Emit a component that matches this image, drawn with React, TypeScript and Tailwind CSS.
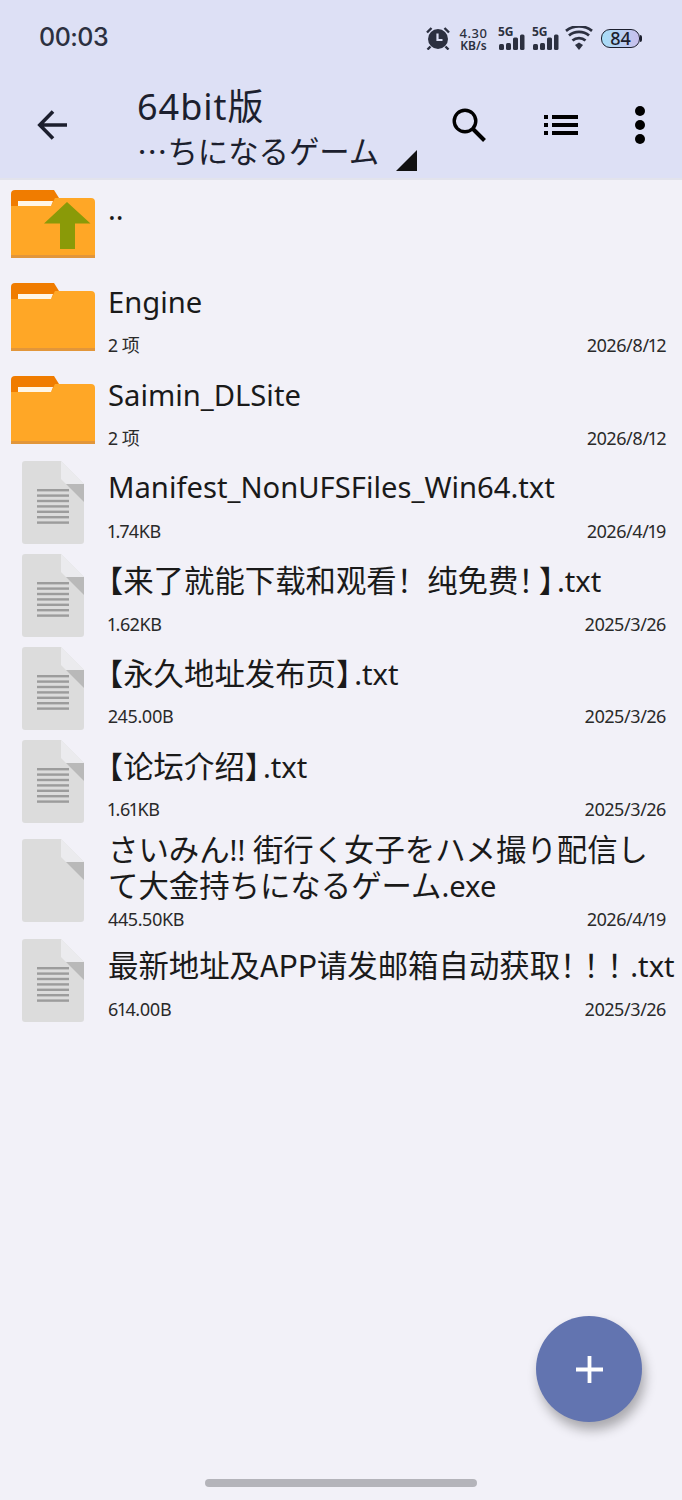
type Item = {
  kind: "up" | "folder" | "doc" | "blank";
  name: string;
  sub?: string;
  date?: string;
  tall?: boolean;
};

const items: Item[] = [
  { kind: "up", name: ".." },
  { kind: "folder", name: "Engine", sub: "2 项", date: "2026/8/12" },
  { kind: "folder", name: "Saimin_DLSite", sub: "2 项", date: "2026/8/12" },
  { kind: "doc", name: "Manifest_NonUFSFiles_Win64.txt", sub: "1.74KB", date: "2026/4/19" },
  { kind: "doc", name: "【来了就能下载和观看！纯免费！】.txt", sub: "1.62KB", date: "2025/3/26" },
  { kind: "doc", name: "【永久地址发布页】.txt", sub: "245.00B", date: "2025/3/26" },
  { kind: "doc", name: "【论坛介绍】.txt", sub: "1.61KB", date: "2025/3/26" },
  {
    kind: "blank",
    name: "さいみん!! 街行く女子をハメ撮り配信し\nて大金持ちになるゲーム.exe",
    sub: "445.50KB",
    date: "2026/4/19",
    tall: true,
  },
  { kind: "doc", name: "最新地址及APP请发邮箱自动获取！！！.txt", sub: "614.00B", date: "2025/3/26" },
];

const cjkFont = "font-['Noto_Sans_CJK_SC',sans-serif] text-[30.4px] leading-[0px]";

// the reference mixes a slightly larger CJK face with latin, and squeezes brackets and trailing "！"
function Title({ text }: { text: string }) {
  const parts = text.match(/[【】！\n]|APP|[\u3040-\u9fff]+|[^【】！\u3040-\u9fff\n]+?(?=APP|[【】！\u3040-\u9fff\n]|$)/g) ?? [];
  return (
    <>
      {parts.map((p, i) => {
        if (p === "【") {
          return (
            <span key={i} className={cjkFont + " [font-feature-settings:'halt']"}>
              {p}
            </span>
          );
        }
        if (p === "】") {
          return (
            <span key={i} className={cjkFont + " [font-feature-settings:'halt'] tracking-[3px]"}>
              {p}
            </span>
          );
        }
        if (p === "！") {
          const next = parts[i + 1] ?? "";
          if (next === "】") {
            return (
              <span key={i} className={cjkFont + " tracking-[-10px]"}>
                {p}
              </span>
            );
          }
          const squeezed = next === "！" || next.startsWith(".");
          return (
            <span key={i} className={squeezed ? cjkFont + " tracking-[-7px]" : cjkFont}>
              {p}
            </span>
          );
        }
        if (p === "APP" || /[\u3040-\u9fff]/.test(p)) {
          return (
            <span key={i} className={cjkFont}>
              {p}
            </span>
          );
        }
        return <span key={i}>{p}</span>;
      })}
    </>
  );
}

function FolderIcon({ up }: { up?: boolean }) {
  return (
    <svg width="84" height="68" viewBox="0 0 84 68" className="ml-[11px] mt-[10px]">
      <path d="M0 4a4 4 0 0 1 4-4h39l5 8v10H0z" fill="#f07c00" />
      <path d="M0 16h40l4-8h36a4 4 0 0 1 4 4v56H0z" fill="#ffa726" />
      <path d="M7 11h35l-2 5H7z" fill="#fff6e6" />
      <rect x="0" y="65" width="84" height="3" fill="#e2963a" />
      {up && <path d="M56 12l23.500 21.500H64V59H49V33.500H33z" fill="#8a9a08" />}
    </svg>
  );
}

function DocIcon({ lines }: { lines?: boolean }) {
  return (
    <svg width="62" height="83" viewBox="0 0 62 83" className="ml-[22px] mt-[3px]">
      <path d="M3 0h36l23 23v57a3 3 0 0 1-3 3H3a3 3 0 0 1-3-3V3a3 3 0 0 1 3-3z" fill="#dcdcdc" />
      <path d="M39 0l23 23H44l-5-5z" fill="#ebebee" />
      <path d="M44 23h18v18z" fill="#b9b9b9" />
      {lines && (
        <g fill="#9c9c9c">
          <rect x="15" y="28" width="32" height="2.4" />
          <rect x="15" y="33.4" width="32" height="2.4" />
          <rect x="15" y="38.8" width="32" height="2.4" />
          <rect x="15" y="44.2" width="32" height="2.4" />
          <rect x="15" y="49.6" width="32" height="2.4" />
          <rect x="15" y="55" width="32" height="2.4" />
          <rect x="15" y="60.4" width="32" height="2.4" />
        </g>
      )}
    </svg>
  );
}

function Signal() {
  return (
    <div className="flex flex-col items-start w-[27px]">
      <span className="text-[12px] leading-[10px] font-bold text-[#2c3040]">5G</span>
      <svg width="27" height="16" viewBox="0 0 27 16" className="-mt-[3px]">
        <g fill="#2c3040">
          <rect x="1" y="10" width="5" height="6" rx="1.5" />
          <rect x="8" y="9" width="5" height="7" rx="1.5" />
          <rect x="15" y="3.500" width="5" height="12.500" rx="1.5" />
          <rect x="22" y="0.500" width="4.500" height="15.500" rx="1.5" />
        </g>
      </svg>
    </div>
  );
}

function StatusBar() {
  return (
    <div className="h-[76px] flex items-center justify-between pl-[39px] pr-[40px]">
      <span className="text-[25px] font-medium text-[#2c3040] tracking-[-0.5px] font-['Inter',sans-serif]">
        00:03
      </span>
      <div className="flex items-center">
        <svg width="24" height="24" viewBox="0 0 24 24">
          <circle cx="12" cy="13" r="10" fill="#2c3040" />
          <path d="M11.500 7.500v6.500h5" fill="none" stroke="#dde0f5" strokeWidth="2.200" />
          <path d="M1 6.500l4.500-4.500M23 6.500l-4.500-4.500M4.500 20.500l-3 3M19.500 20.500l3 3" stroke="#2c3040" strokeWidth="2.400" />
        </svg>
        <div className="flex flex-col items-center ml-[8px] w-[31px] text-[#2c3040]">
          <span className="text-[13px] leading-[14px] tracking-[0.6px] font-medium">4.30</span>
          <span className="text-[12px] leading-[11px] font-semibold">KB/s</span>
        </div>
        <div className="ml-[9px]">
          <Signal />
        </div>
        <div className="ml-[7px]">
          <Signal />
        </div>
        <svg width="28" height="24" viewBox="0 0 28 24" className="ml-[6px]">
          <path d="M14 24l-4-5 4-2.500 4 2.500z" fill="#2c3040" />
          <g fill="none" stroke="#2c3040" strokeWidth="2.800">
            <path d="M7.500 14.500c3.600-3.200 9.400-3.200 13 0" />
            <path d="M4 9.500c5.600-4.800 14.400-4.800 20 0" />
            <path d="M1 4.800c7.400-5.800 18.600-5.800 26 0" />
          </g>
        </svg>
        <div className="ml-[8px] flex items-center">
          <div className="w-[39px] h-[19px] rounded-[9px] border-[1.5px] border-[#1c1f2e] bg-gradient-to-r from-[#a6def8] to-[#c8bfec] flex items-center justify-center text-[18px] leading-none font-medium text-[#1c1f2e]">
            84
          </div>
          <div className="w-[2px] h-[7px] rounded-r-[2px] bg-[#1c1f2e]" />
        </div>
      </div>
    </div>
  );
}

function Toolbar() {
  return (
    <div className="relative h-[103px] flex items-start">
      <svg width="32" height="32" viewBox="0 0 32 32" className="ml-[37px] mt-[33px]">
        <path d="M30 16H3M16 2.500L2.800 16 16 29.500" fill="none" stroke="#1c1f2e" strokeWidth="3.600" />
      </svg>
      <div className="ml-[68px] w-[290px] flex flex-col text-[#1c1f2e]">
        <span className="text-[36px] leading-[44px] mt-[9px] tracking-[1px] whitespace-nowrap">64bit版</span>
        <span className="text-[30.4px] leading-[44px] -mt-[1px] whitespace-nowrap font-['Noto_Sans_CJK_SC',sans-serif]">…ちになるゲーム</span>
      </div>
      <svg width="36" height="36" viewBox="0 0 36 36" className="ml-[24px] mt-[31px]">
        <circle cx="14" cy="14" r="10.800" fill="none" stroke="#000" strokeWidth="3.400" />
        <path d="M22 22l11.500 11.500" stroke="#000" strokeWidth="4" />
      </svg>
      <svg width="36" height="22" viewBox="0 0 36 22" className="ml-[57px] mt-[38px]">
        <g fill="#000">
          <rect x="0" y="1" width="4" height="4" />
          <rect x="8" y="1" width="26" height="4" />
          <rect x="0" y="9" width="4" height="4" />
          <rect x="8" y="9" width="26" height="4" />
          <rect x="0" y="17" width="4" height="4" />
          <rect x="8" y="17" width="26" height="4" />
        </g>
      </svg>
      <svg width="12" height="40" viewBox="0 0 12 40" className="ml-[54px] mt-[29px]">
        <circle cx="6" cy="6" r="5" fill="#000" />
        <circle cx="6" cy="20" r="5" fill="#000" />
        <circle cx="6" cy="34" r="5" fill="#000" />
      </svg>
      <svg width="21" height="21" viewBox="0 0 21 21" className="absolute left-[396px] top-[74px]">
        <path d="M21 0v21H0z" fill="#111" />
      </svg>
    </div>
  );
}

function Row({ item }: { item: Item }) {
  const isFolder = item.kind === "up" || item.kind === "folder";
  const hasCjk = /[\u3040-\u9fff]/.test(item.name);
  let titleClass = "text-[29.2px] leading-[40px] mt-[9px] text-[#1a1a1a] whitespace-pre";
  let subClass = "flex justify-between items-center h-[24px] mt-[12px] text-[#2a2a2a] text-[18px] proportional-nums tracking-[-0.4px]";
  if (hasCjk) {
    titleClass = "text-[29.2px] leading-[40px] mt-[10px] text-[#1a1a1a] whitespace-pre";
    subClass = "flex justify-between items-center h-[24px] mt-[11px] text-[#2a2a2a] text-[18px] proportional-nums tracking-[-0.4px]";
  }
  if (item.tall) {
    titleClass = "text-[29.2px] leading-[36px] mt-[3px] text-[#1a1a1a] whitespace-pre";
    subClass = "flex justify-between items-center h-[24px] mt-[3px] text-[#2a2a2a] text-[18px] proportional-nums tracking-[-0.4px]";
  }
  return (
    <div className={item.tall ? "flex h-[107px]" : "flex h-[92.750px]"}>
      <div className={item.tall ? "w-[108px] shrink-0 pt-[7px]" : "w-[108px] shrink-0"}>
        {isFolder ? (
          <FolderIcon up={item.kind === "up"} />
        ) : (
          <DocIcon lines={item.kind === "doc"} />
        )}
      </div>
      <div className="flex-1 min-w-0 pr-[16px]">
        <div className={titleClass}>
          <Title text={item.name} />
        </div>
        {item.sub && (
          <div className={subClass}>
            <span>{item.sub}</span>
            <span>{item.date}</span>
          </div>
        )}
      </div>
    </div>
  );
}

export default function App() {
  return (
    <div className="relative w-[682px] h-[1500px] overflow-hidden bg-[#f2f1f8] flex flex-col font-['Noto_Sans','Noto_Sans_CJK_SC',sans-serif]">
      <header className="h-[180px] shrink-0 bg-[#dde0f5] border-b-[2px] border-[#e2e3ec]">
        <StatusBar />
        <Toolbar />
      </header>
      <main className="flex flex-col">
        {items.map((item) => (
          <Row key={item.name} item={item} />
        ))}
      </main>
      <button className="absolute left-[536px] top-[1316px] w-[106px] h-[106px] rounded-full bg-[#6274b0] flex items-center justify-center shadow-[3px_8px_12px_rgba(0,0,0,0.3)]">
        <svg width="27" height="27" viewBox="0 0 27 27">
          <path d="M13.500 0v27M0 13.500h27" stroke="#fff" strokeWidth="3.800" />
        </svg>
      </button>
      <div className="absolute left-[205px] top-[1479px] w-[272px] h-[8px] rounded-full bg-[#b4b4ba]" />
    </div>
  );
}
